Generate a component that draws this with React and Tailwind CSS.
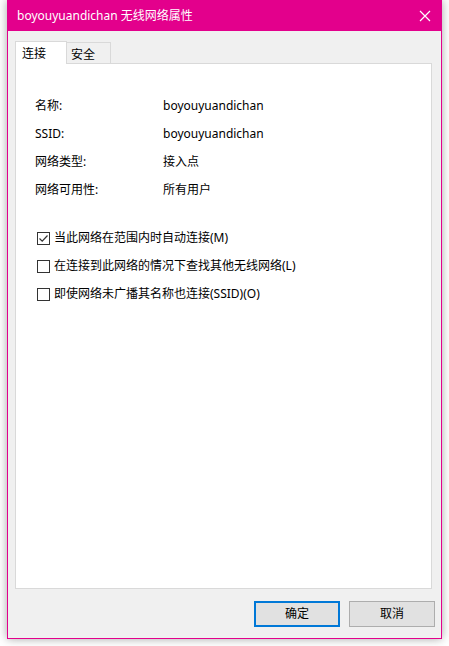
import React, { useState } from "react";

const font = { fontFamily: '"Noto Sans", "Noto Sans CJK SC", sans-serif' };

function Checkbox({ checked, onChange, label }) {
    return (
        <label className="flex items-center gap-[4px] h-[28px] cursor-default" onClick={onChange}>
            <span className="w-[13px] h-[13px] border border-[#333333] bg-white flex items-center justify-center shrink-0">
                {checked && (
                    <svg width="11" height="11" viewBox="0 0 11 11">
                        <path d="M1.5 5.5 L4.2 8.2 L9.5 2.5" fill="none" stroke="#333333" strokeWidth="1.2" />
                    </svg>
                )}
            </span>
            <span className="text-[12px] text-black">{label}</span>
        </label>
    );
}

export default function App() {
    const [tab, setTab] = useState("连接");
    const [opts, setOpts] = useState([true, false, false]);

    // Network info rows
    const rows = [
        ["名称:", "boyouyuandichan"],
        ["SSID:", "boyouyuandichan"],
        ["网络类型:", "接入点"],
        ["网络可用性:", "所有用户"],
    ];

    const labels = [
        "当此网络在范围内时自动连接(M)",
        "在连接到此网络的情况下查找其他无线网络(L)",
        "即使网络未广播其名称也连接(SSID)(O)",
    ];

    const toggle = (i) => setOpts(opts.map((v, j) => (j === i ? !v : v)));

    return (
        <div className="w-[449px] h-[646px] bg-white overflow-hidden" style={font}>
            <div className="ml-[7px] w-[435px] h-[639px] bg-[#f0f0f0] border border-t-0 border-[#e3008c] shadow-[0_0_9px_rgba(0,0,0,0.35)] flex flex-col">
                {/* Title bar */}
                <div className="h-[31px] bg-[#e3008c] flex items-center justify-between pl-[9px] pr-[9px] shrink-0">
                    <span className="text-white text-[12px] leading-none">boyouyuandichan 无线网络属性</span>
                    <svg width="12" height="12" viewBox="0 0 12 12" className="mr-[1px]">
                        <path d="M1 1 L11 11 M11 1 L1 11" stroke="white" strokeWidth="1.2" />
                    </svg>
                </div>

                {/* Tabs */}
                <div className="flex items-end pl-[7px] pt-[9px] h-[32px] shrink-0">
                    {["连接", "安全"].map((t) =>
                        tab === t ? (
                            <button
                                key={t}
                                onClick={() => setTab(t)}
                                className="h-[23px] w-[52px] bg-white border border-b-0 border-[#d9d9d9] text-[12px] text-black flex items-start pt-[3px] pl-[6px] -mb-[1px] relative z-10"
                            >
                                {t}
                            </button>
                        ) : (
                            <button
                                key={t}
                                onClick={() => setTab(t)}
                                className="h-[21px] w-[44px] bg-[#f0f0f0] border border-b-0 border-l-0 border-[#d9d9d9] text-[12px] text-black flex items-start pt-[3px] pl-[4px]"
                            >
                                {t}
                            </button>
                        )
                    )}
                </div>

                {/* Panel */}
                <div className="mx-[7px] w-[417px] h-[526px] bg-white border border-[#d9d9d9] pt-[28px] pl-[19px]">
                    {tab === "连接" && (
                        <>
                            <div className="flex flex-col">
                                {rows.map(([k, v]) => (
                                    <div key={k} className="flex h-[28px] items-center text-[12px] text-black">
                                        <span className="w-[128px]">{k}</span>
                                        <span>{v}</span>
                                    </div>
                                ))}
                            </div>
                            <div className="flex flex-col mt-[20px] pl-[2px]">
                                {labels.map((l, i) => (
                                    <Checkbox key={l} checked={opts[i]} onChange={() => toggle(i)} label={l} />
                                ))}
                            </div>
                        </>
                    )}
                </div>

                {/* Buttons */}
                <div className="flex justify-end gap-[9px] pr-[6px] pt-[12px]">
                    <button className="w-[86px] h-[26px] bg-[#e1e1e1] border-2 border-[#0078d7] text-[12px] text-black">确定</button>
                    <button className="w-[86px] h-[26px] bg-[#e1e1e1] border border-[#adadad] text-[12px] text-black">取消</button>
                </div>
            </div>
        </div>
    );
}
